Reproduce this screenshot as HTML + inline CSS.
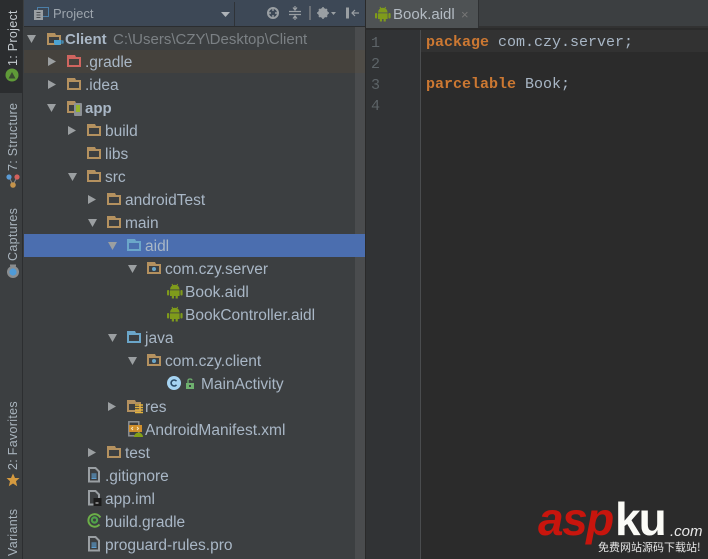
<!DOCTYPE html>
<html><head><meta charset="utf-8">
<style>
html,body{margin:0;padding:0;width:708px;height:559px;overflow:hidden;background:#3c3f41}
*{box-sizing:border-box}
.a{position:absolute}
#t div.r{position:absolute;height:23px;margin-top:2px;font:15.5px/22px "Liberation Sans",sans-serif;color:#a9b7c6;white-space:nowrap}
.m{position:absolute;font:15px/21px "Liberation Mono",monospace;white-space:pre;color:#a9b7c6}
.n{position:absolute;left:371px;font:15px/21px "Liberation Mono",monospace;color:#5d6468}
.v{position:absolute;font:12.5px/14px "Liberation Sans",sans-serif;color:#a9b4bd;transform:rotate(-90deg);transform-origin:0 0;white-space:nowrap;letter-spacing:.3px}
svg{position:absolute;overflow:visible}
</style></head><body>
<svg width="0" height="0" style="position:absolute"><defs>
<path id="fo" fill-rule="evenodd" d="M0 1H8L9 3H14V13H0ZM2 5V11H12V5Z"/>
<g id="f"><use href="#fo" fill="#b4915f"/></g>
<g id="fr"><use href="#fo" fill="#d0655f"/></g>
<g id="fb"><use href="#fo" fill="#6ba6c9"/></g>
<g id="fp"><use href="#fo" fill="#b4915f"/><circle cx="7" cy="8" r="2" fill="#6aa5c8"/></g>
<g id="an"><path d="M3 6.5a4.8 4.8 0 0 1 9.6 0Z" fill="#7f9b1b"/><rect x="3" y="7.3" width="9.6" height="5.7" fill="#7f9b1b"/><rect x="0" y="7" width="2.2" height="5.5" rx="1" fill="#7f9b1b"/><rect x="13.4" y="7" width="2.2" height="5.5" rx="1" fill="#7f9b1b"/><rect x="4.8" y="12.5" width="2.2" height="3" fill="#7f9b1b"/><rect x="8.6" y="12.5" width="2.2" height="3" fill="#7f9b1b"/><path d="M5 1L6 3M10.6 1L9.6 3" stroke="#7f9b1b"/></g>
<g id="d"><path d="M1 1H7.5L11 4.5V14.5H1Z" fill="#3c3f41" stroke="#9a9fa3" stroke-width="2"/></g>
<g id="lines"><rect x="3.5" y="6.5" width="5" height="5.5" fill="#5c9dd0"/><path d="M3.5 8H8.5M3.5 10H8.5" stroke="#3c3f41" stroke-width=".7"/></g>
<path id="rt" d="M0 1L8 5.5L0 10Z" fill="#9b9fa1"/>
<path id="dn" d="M1 1H10L5.5 9Z" fill="#9b9fa1"/>
</defs></svg>

<!-- left strip -->
<div class="a" style="left:0;top:0;width:23px;height:559px;background:#3c3f41;border-right:1px solid #2c2e30"></div>
<div class="a" style="left:0;top:0;width:23px;height:93px;background:#2b2d2f;border-right:1px solid #2c2e30"></div>
<div class="v" style="left:6px;top:66px;color:#c5cbd0">1: Project</div>
<svg style="left:5px;top:68px" width="14" height="14"><circle cx="7" cy="7" r="6.5" fill="#5f9a38"/><path d="M3.5 10.5L7 4L10.5 10.5Z" fill="#3a4a32"/></svg>
<div class="v" style="left:6px;top:171px">7: Structure</div>
<svg style="left:6px;top:173px" width="14" height="16"><path d="M3 4L7 12L11 4" stroke="#888" fill="none"/><circle cx="3" cy="4" r="2.6" fill="#5b9bd5"/><circle cx="11" cy="4" r="2.6" fill="#d2605c"/><circle cx="7" cy="12" r="2.8" fill="#c4934b"/></svg>
<div class="v" style="left:6px;top:261px">Captures</div>
<svg style="left:6px;top:264px" width="14" height="15"><circle cx="7" cy="8" r="6" fill="#8a8d8f"/><circle cx="7" cy="8" r="3.6" fill="#4f9bd8"/><rect x="4" y="0.5" width="6" height="2" fill="#8a8d8f"/></svg>
<div class="v" style="left:6px;top:470px">2: Favorites</div>
<svg style="left:6px;top:473px" width="14" height="14"><path d="M7 .5L9 5H13.5L10 8.3L11.2 13.2L7 10.5L2.8 13.2L4 8.3L.5 5H5Z" fill="#d59a3f"/></svg>
<div class="v" style="left:6px;top:556px">Variants</div>

<!-- project header -->
<div class="a" style="left:24px;top:0;width:341px;height:27px;background:#3d4856;border-bottom:1px solid #2b2d2f"></div>
<div class="a" style="left:234px;top:2px;width:1px;height:24px;background:#2f3338"></div>
<svg style="left:34px;top:7px" width="15" height="13"><rect x="3.5" y=".5" width="11" height="9" fill="none" stroke="#4c7fa8"/><rect x="0" y="3" width="9" height="10" fill="#9a9fa3"/><path d="M2.5 5.5H6.5M2.5 8H6.5M2.5 10.5H6.5" stroke="#4a4d50"/></svg>
<div class="a" style="left:53px;top:5px;font:13px/18px 'Liberation Sans',sans-serif;color:#9da5ad">Project</div>
<svg style="left:221px;top:12px" width="9" height="5"><path d="M0 0H9L4.5 5Z" fill="#aeb3b8"/></svg>
<svg style="left:266px;top:6px" width="100" height="16" fill="none" stroke="#9a9fa3">
<circle cx="7" cy="7" r="5" stroke-width="2"/><path d="M7 2V5M7 9V12M2 7H5M9 7H12" stroke-width="1.4"/>
<path d="M23 5.5H35M23 8.5H35M29 0V3M27 1.5L29 4L31 1.5M29 14V11M27 12.5L29 10L31 12.5" stroke-width="1.2"/>
<path d="M44 0V14" stroke="#6b7076" stroke-width="2"/>
<circle cx="57" cy="7" r="3.5" stroke-width="3"/><path d="M57 1V13M51 7H63M53 3L61 11M61 3L53 11" stroke-width="1.5"/>
<path d="M65 6H70L67.5 9Z" fill="#9a9fa3" stroke="none"/>
<rect x="80" y="1.5" width="3" height="11" fill="#9a9fa3" stroke="none"/><path d="M93 7H86M89 4L86 7L89 10" stroke-width="1.2"/>
</svg>

<!-- tree -->
<div id="t">
<div class="a" style="left:24px;top:50px;width:341px;height:23px;background:#45423d"></div>
<div class="a" style="left:24px;top:234px;width:341px;height:23px;background:#4b6eaf"></div>
<div class="a" style="left:355px;top:27px;width:10px;height:532px;background:#4a4c4e"></div>
<div class="a" style="left:355px;top:50px;width:10px;height:23px;background:#4f4c47"></div>
<div class="a" style="left:355px;top:234px;width:10px;height:23px;background:#4b6eaf"></div>

<svg style="left:26px;top:34px" width="11" height="9"><use href="#dn"/></svg>
<svg style="left:47px;top:32px" width="20" height="16"><use href="#f"/><path d="M7 8H14V11Q14 13 12 13H9Q7 13 7 11Z" fill="#4ba3d4"/><path d="M14 9H16V11H14" fill="none" stroke="#4ba3d4"/></svg>
<div class="r" style="left:65px;top:27px;font-weight:bold;font-size:15px">Client</div>
<div class="r" style="left:113px;top:27px;color:#7b8084;font-size:15px">C:\Users\CZY\Desktop\Client</div>

<svg style="left:48px;top:56px" width="9" height="11"><use href="#rt"/></svg>
<svg style="left:67px;top:54px" width="16" height="16"><use href="#fr"/></svg>
<div class="r" style="left:85px;top:50px">.gradle</div>

<svg style="left:48px;top:79px" width="9" height="11"><use href="#rt"/></svg>
<svg style="left:67px;top:77px" width="16" height="16"><use href="#f"/></svg>
<div class="r" style="left:85px;top:73px">.idea</div>

<svg style="left:46px;top:103px" width="11" height="9"><use href="#dn"/></svg>
<svg style="left:67px;top:100px" width="16" height="16"><use href="#f"/><rect x="7" y="3" width="8" height="13" rx="1" fill="#8c9094"/><rect x="9" y="5" width="4" height="7" fill="#95b52a"/></svg>
<div class="r" style="left:85px;top:96px;font-weight:bold;font-size:15px">app</div>

<svg style="left:68px;top:125px" width="9" height="11"><use href="#rt"/></svg>
<svg style="left:87px;top:123px" width="16" height="16"><use href="#f"/></svg>
<div class="r" style="left:105px;top:119px">build</div>

<svg style="left:87px;top:146px" width="16" height="16"><use href="#f"/></svg>
<div class="r" style="left:105px;top:142px">libs</div>

<svg style="left:67px;top:172px" width="11" height="9"><use href="#dn"/></svg>
<svg style="left:87px;top:169px" width="16" height="16"><use href="#f"/></svg>
<div class="r" style="left:105px;top:165px">src</div>

<svg style="left:88px;top:194px" width="9" height="11"><use href="#rt"/></svg>
<svg style="left:107px;top:192px" width="16" height="16"><use href="#f"/></svg>
<div class="r" style="left:125px;top:188px">androidTest</div>

<svg style="left:87px;top:218px" width="11" height="9"><use href="#dn"/></svg>
<svg style="left:107px;top:215px" width="16" height="16"><use href="#f"/></svg>
<div class="r" style="left:125px;top:211px">main</div>

<svg style="left:107px;top:241px" width="11" height="9"><use href="#dn"/></svg>
<svg style="left:127px;top:238px" width="16" height="16"><use href="#fb"/></svg>
<div class="r" style="left:145px;top:234px">aidl</div>

<svg style="left:127px;top:264px" width="11" height="9"><use href="#dn"/></svg>
<svg style="left:147px;top:261px" width="16" height="16"><use href="#fp"/></svg>
<div class="r" style="left:165px;top:257px">com.czy.server</div>

<svg style="left:167px;top:283px" width="16" height="17"><use href="#an"/></svg>
<div class="r" style="left:185px;top:280px">Book.aidl</div>

<svg style="left:167px;top:306px" width="16" height="17"><use href="#an"/></svg>
<div class="r" style="left:185px;top:303px">BookController.aidl</div>

<svg style="left:107px;top:333px" width="11" height="9"><use href="#dn"/></svg>
<svg style="left:127px;top:330px" width="16" height="16"><use href="#fb"/></svg>
<div class="r" style="left:145px;top:326px">java</div>

<svg style="left:127px;top:356px" width="11" height="9"><use href="#dn"/></svg>
<svg style="left:147px;top:353px" width="16" height="16"><use href="#fp"/></svg>
<div class="r" style="left:165px;top:349px">com.czy.client</div>

<svg style="left:167px;top:376px" width="14" height="14"><circle cx="7" cy="7" r="7" fill="#a6d4f2"/><path d="M9.5 5.2A3 3 0 1 0 9.5 8.8" fill="none" stroke="#2a4a66" stroke-width="1.6"/></svg>
<svg style="left:185px;top:378px" width="10" height="11"><rect x="1" y="5" width="8" height="6" fill="#6fb06f"/><path d="M3 5V2.5Q3 1 5 1Q7 1 7 2.5" fill="none" stroke="#6fb06f" stroke-width="1.3"/><rect x="4" y="7" width="2" height="2" fill="#3c3f41"/></svg>
<div class="r" style="left:201px;top:372px">MainActivity</div>

<svg style="left:108px;top:401px" width="9" height="11"><use href="#rt"/></svg>
<svg style="left:127px;top:399px" width="16" height="16"><use href="#f"/><path d="M8 6H16M8 8.5H16M8 11H16M8 13.5H16" stroke="#e3b23c" stroke-width="1.5"/></svg>
<div class="r" style="left:145px;top:395px">res</div>

<svg style="left:128px;top:421px" width="15" height="17"><rect x=".8" y=".8" width="10" height="14" fill="none" stroke="#8c9094" stroke-width="1.5"/><rect x="1" y="4" width="13" height="7" fill="#d08f2c"/><path d="M5 6L3.5 7.5L5 9M9 6L10.5 7.5L9 9" stroke="#f5e6c0" fill="none"/><path d="M6 16a4.5 4.5 0 0 1 9 0Z" fill="#82a017"/></svg>
<div class="r" style="left:145px;top:418px">AndroidManifest.xml</div>

<svg style="left:88px;top:447px" width="9" height="11"><use href="#rt"/></svg>
<svg style="left:107px;top:445px" width="16" height="16"><use href="#f"/></svg>
<div class="r" style="left:125px;top:441px">test</div>

<svg style="left:88px;top:467px" width="13" height="16"><use href="#d"/><use href="#lines"/></svg>
<div class="r" style="left:105px;top:464px">.gitignore</div>

<svg style="left:88px;top:490px" width="14" height="17"><use href="#d"/><rect x="5.5" y="8" width="8" height="8" fill="#1c1c1c"/><path d="M7.5 13H10.5" stroke="#ddd"/></svg>
<div class="r" style="left:105px;top:487px">app.iml</div>

<svg style="left:87px;top:513px" width="15" height="15" fill="none"><path d="M13.3 4.5A6.3 6.3 0 1 0 12.5 11.5" stroke="#6cb048" stroke-width="2"/><circle cx="7.5" cy="7" r="2.6" stroke="#4fa24a" stroke-width="2.2"/></svg>
<div class="r" style="left:105px;top:510px">build.gradle</div>

<svg style="left:88px;top:536px" width="13" height="16"><use href="#d"/><use href="#lines"/></svg>
<div class="r" style="left:105px;top:533px">proguard-rules.pro</div>
</div>

<!-- divider + tab bar -->
<div class="a" style="left:365px;top:0;width:343px;height:559px;background:#2b2b2b;border-left:1px solid #2a2a2a"></div>
<div class="a" style="left:366px;top:0;width:342px;height:28px;background:#3c3f41;border-bottom:2px solid #323232"></div>
<div class="a" style="left:366px;top:0;width:113px;height:28px;background:#4e5254;border-right:1px solid #2f3133"></div>
<svg style="left:375px;top:6px" width="16" height="17"><use href="#an"/></svg>
<div class="a" style="left:393px;top:5px;font:15px/20px 'Liberation Sans',sans-serif;color:#b4bcc4">Book.aidl</div>
<div class="a" style="left:461px;top:5px;font:13px/20px 'Liberation Sans',sans-serif;color:#777">×</div>

<!-- editor -->
<div class="a" style="left:366px;top:30px;width:54px;height:529px;background:#313335"></div>
<div class="a" style="left:420px;top:30px;width:1px;height:529px;background:#4a4c4e"></div>
<div class="a" style="left:421px;top:30px;width:287px;height:22px;background:#323232"></div>
<div class="n" style="top:33px">1</div>
<div class="n" style="top:54px">2</div>
<div class="n" style="top:75px">3</div>
<div class="n" style="top:96px">4</div>
<div class="m" style="left:426px;top:32px"><b style="color:#cc7832">package</b> com.czy.server;</div>
<div class="m" style="left:426px;top:74px"><b style="color:#cc7832">parcelable</b> Book;</div>

<!-- watermark -->
<div class="a" style="left:538px;top:495px;font:italic bold 46px/48px 'Liberation Sans',sans-serif;color:#c8150d;letter-spacing:-1.5px">asp</div>
<div class="a" style="left:615px;top:495px;font:bold 46px/48px 'Liberation Sans',sans-serif;color:#fbfbf6;letter-spacing:-2px">ku</div>
<div class="a" style="left:670px;top:523px;font:italic 15px/18px 'Liberation Sans',sans-serif;color:#e8e8e8">.com</div>
<div class="a" style="left:598px;top:540px;font:11px/14px 'Noto Sans CJK SC',sans-serif;color:#e6e6e6;white-space:nowrap">免费网站源码下载站!</div>
</body></html>
